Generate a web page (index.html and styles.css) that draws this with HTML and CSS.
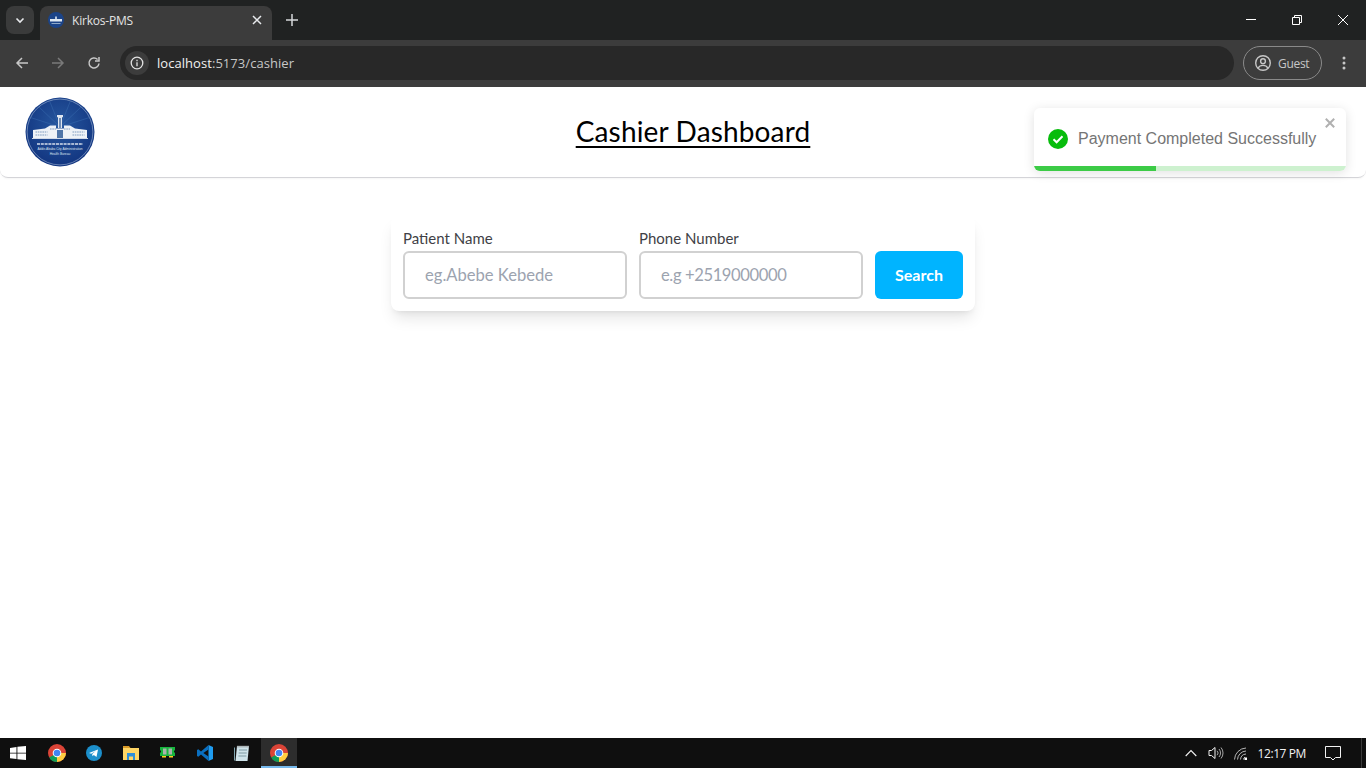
FILE: index.html
```html
<!DOCTYPE html>
<html lang="en">
<head>
<meta charset="utf-8">
<title>Kirkos-PMS</title>
<link rel="stylesheet" href="styles.css">
</head>
<body>
<div class="screen">
  <div class="tabstrip">
    <button class="tabsearch"><svg width="12" height="12" viewBox="0 0 12 12"><path d="M2.500 4.500 6 8l3.500-3.500" fill="none" stroke="#e8eaed" stroke-width="1.600"/></svg></button>
    <div class="tab">
      <svg class="favicon" width="16" height="16" viewBox="0 0 16 16"><circle cx="8" cy="8" r="8" fill="#1c4488"/><rect x="2" y="7" width="12" height="2.500" fill="#dfe8f2"/><rect x="7.200" y="4.500" width="1.600" height="3" fill="#dfe8f2"/><rect x="3.500" y="11" width="9" height="1" fill="#8fa8c8"/></svg>
      <span class="tabtitle">Kirkos-PMS</span>
      <svg class="tabclose" width="10" height="10" viewBox="0 0 10 10"><path d="M1 1l8 8M9 1 1 9" stroke="#e8eaed" stroke-width="1.500"/></svg>
    </div>
    <svg class="newtab" width="12" height="12" viewBox="0 0 12 12"><path d="M6 0v12M0 6h12" stroke="#d5d7da" stroke-width="1.500"/></svg>
    <div class="winctl">
      <svg width="46" height="40" viewBox="0 0 46 40"><path d="M18 19.500h10" stroke="#fff"/></svg>
      <svg width="46" height="40" viewBox="0 0 46 40"><path d="M18.500 17.500h7v7h-7zM20.500 17.500v-2h7v7h-2" fill="none" stroke="#fff"/></svg>
      <svg width="46" height="40" viewBox="0 0 46 40"><path d="M18 15l10 10M28 15 18 25" stroke="#fff"/></svg>
    </div>
  </div>
  <div class="toolbar">
    <svg class="navicon" width="16" height="16" viewBox="0 0 16 16"><path d="M14 8H3M8 3 3 8l5 5" fill="none" stroke="#c7c7c7" stroke-width="1.500"/></svg>
    <svg class="navicon" width="16" height="16" viewBox="0 0 16 16"><path d="M2 8h11M8 3l5 5-5 5" fill="none" stroke="#7a7a7a" stroke-width="1.500"/></svg>
    <svg class="navicon" width="16" height="16" viewBox="0 0 16 16"><path d="M13 8.500A5 5 0 1 1 11.600 4.500M13 2v4H9" fill="none" stroke="#c7c7c7" stroke-width="1.500"/></svg>
    <div class="omnibox">
      <span class="siteinfo"><svg width="14" height="14" viewBox="0 0 14 14"><circle cx="7" cy="7" r="5.800" fill="none" stroke="#e3e3e3" stroke-width="1.300"/><path d="M7 6.200v4M7 3.800v1.400" stroke="#e3e3e3" stroke-width="1.300"/></svg></span>
      <span class="url"><span class="host">localhost</span>:5173/cashier</span>
    </div>
    <div class="guest">
      <svg width="18" height="18" viewBox="0 0 18 18"><circle cx="9" cy="9" r="7.300" fill="none" stroke="#c7c7c7" stroke-width="1.400"/><circle cx="9" cy="7.200" r="2.400" fill="none" stroke="#c7c7c7" stroke-width="1.400"/><path d="M4.200 14c1-2 3-2.600 4.800-2.600s3.800.6 4.800 2.600" fill="none" stroke="#c7c7c7" stroke-width="1.400"/></svg>
      <span>Guest</span>
    </div>
    <svg class="menu" width="4" height="14" viewBox="0 0 4 14"><circle cx="2" cy="2" r="1.500" fill="#c7c7c7"/><circle cx="2" cy="7" r="1.500" fill="#c7c7c7"/><circle cx="2" cy="12" r="1.500" fill="#c7c7c7"/></svg>
  </div>

  <div class="page">
    <header class="apphead">
      <svg class="logo" width="70" height="70" viewBox="0 0 70 70">
        <defs>
          <radialGradient id="sky" cx="50%" cy="40%" r="60%"><stop offset="0" stop-color="#27589f"/><stop offset="1" stop-color="#123580"/></radialGradient>
        </defs>
        <circle cx="35" cy="35" r="34.500" fill="url(#sky)"/>
        <circle cx="35" cy="35" r="32.900" fill="none" stroke="#b9cbe2" stroke-width=".5"/>
        <path d="M35 30 14 10M35 30 25 5M35 30 45 5M35 30 56 10M35 30 4 20M35 30 66 20" stroke="#3a6db0" stroke-width="1" opacity=".5"/>
        <path d="M32 18h6v2.200h-1v10.800h-4V20.200h-1z" fill="#dfe6f0"/>
        <rect x="34" y="21" width="2" height="10" fill="#6f8cb5"/>
        <path d="M8 33l12-1.500 5-3h6v3h8v-3h6l5 3 12 1.500v8H8z" fill="#eef2f7"/>
        <path d="M10.500 35h12M10.500 38h12M25 32h6M39 32h6M47.500 35h12M47.500 38h12" stroke="#7f9bc0" stroke-width="1.100" stroke-dasharray="1.600 .7"/>
        <rect x="32" y="33" width="6" height="8" fill="#4f75a8"/>
        <path d="M7 41.500h56" stroke="#fff" stroke-width=".8"/>
        <path d="M12 47h46" stroke="#d5deeb" stroke-width="1.300" stroke-dasharray="3 .8"/>
        <text class="logotext" x="35" y="52.800">Addis Ababa City Administration</text>
        <text class="logotext" x="35" y="57.800">Health Bureau</text>
      </svg>
      <h1 class="apptitle">Cashier Dashboard</h1>
    </header>

    <main class="content">
      <form class="searchcard">
        <div class="field">
          <label class="fieldlabel" for="pname">Patient Name</label>
          <input class="fieldinput" id="pname" type="text" placeholder="eg.Abebe Kebede">
        </div>
        <div class="field">
          <label class="fieldlabel" for="phone">Phone Number</label>
          <input class="fieldinput phoneinput" id="phone" type="text" placeholder="e.g +2519000000">
        </div>
        <button class="searchbtn" type="button">Search</button>
      </form>
    </main>

    <div class="toast">
      <svg class="toasticon" width="20" height="20" viewBox="0 0 20 20"><circle cx="10" cy="10" r="10" fill="#07bc0c"/><path d="M5.500 10.300 8.600 13.300 14.500 7.200" fill="none" stroke="#fff" stroke-width="2"/></svg>
      <span class="toasttext">Payment Completed Successfully</span>
      <svg class="toastclose" width="10" height="10" viewBox="0 0 10 10"><path d="M.8.8l8.400 8.400M9.200.8.800 9.200" stroke="#b0b0b0" stroke-width="2"/></svg>
      <div class="toastbar"><div class="toastfill"></div></div>
    </div>
  </div>

  <footer class="taskbar">
    <div class="startbtn"><svg width="16" height="16" viewBox="0 0 18 16"><path d="M0 2.300 7.300 1.200v6.400H0zM8.300 1.100 18 0v7.600H8.300zM0 8.500h7.300v6.300L0 13.800zM8.300 8.500H18V16L8.300 14.900z" fill="#fff"/></svg></div>
    <div class="taskitem"><svg width="18" height="18" viewBox="0 0 18 18"><circle cx="9" cy="9" r="9" fill="#db4437"/><path d="M9 9 1.200 13.500A9 9 0 0 0 9 18l4.500-7.800z" fill="#0f9d58"/><path d="M9 9h9a9 9 0 0 1-9 9z" fill="#ffcd40"/><circle cx="9" cy="9" r="4.300" fill="#fff"/><circle cx="9" cy="9" r="3.300" fill="#4285f4"/></svg></div>
    <div class="taskitem"><svg width="16" height="16" viewBox="0 0 16 16"><circle cx="8" cy="8" r="8" fill="#1c8fcb"/><path d="M3 8l9-3.500-1.500 7.500-2.700-2-1.300 1.300-.3-2.300 3.500-3-4.500 2.700z" fill="#fff"/></svg></div>
    <div class="taskitem"><svg width="16" height="16" viewBox="0 0 16 16"><path d="M0 1h6l1.500 2H0z" fill="#d99a28"/><rect y="3" width="16" height="12" fill="#ffd665"/><rect x="4" y="8" width="8" height="7" fill="#2f8fd8"/><rect x="6" y="11.500" width="4" height="3.500" fill="#ffd665"/></svg></div>
    <div class="taskitem"><svg width="15" height="12" viewBox="0 0 15 12"><path d="M0 0h15v3l-1 1v1l1 1v3H0V6l1-1V4L0 3z" fill="#17b53e"/><rect x="3" y="1.500" width="3.500" height="6" fill="#a9b3ab"/><rect x="8.500" y="1.500" width="3.500" height="6" fill="#a9b3ab"/><path d="M2 9h4v1.500H2zM9 9h4v1.500H9z" fill="#ffd21f"/></svg></div>
    <div class="taskitem"><svg width="16" height="16" viewBox="0 0 16 16"><path d="M11.500 0 16 2v12l-4.500 2z" fill="#1f9cf0"/><path d="M11.500 0 4 6.500 1.300 4.200 0 5v6l1.300.8L4 9.500 11.500 16v-4.500L6.300 8l5.200-3.500z" fill="#0a6fc0"/></svg></div>
    <div class="taskitem"><svg width="16" height="17" viewBox="0 0 16 17"><path d="M3 1h12l-1.500 15H1.500z" fill="#cfe3ea"/><path d="M0 2.500h1v13H0z" fill="#7fa3ad"/><path d="M5 5h8M4.700 8h8M4.400 11h8" stroke="#7f9aa3"/><path d="M4 .5v2M6 .5v2M8 .5v2M10 .5v2M12 .5v2M14 .5v2" stroke="#8a8a8a"/></svg></div>
    <div class="taskitem active"><svg width="18" height="18" viewBox="0 0 18 18"><circle cx="9" cy="9" r="9" fill="#db4437"/><path d="M9 9 1.200 13.500A9 9 0 0 0 9 18l4.500-7.800z" fill="#0f9d58"/><path d="M9 9h9a9 9 0 0 1-9 9z" fill="#ffcd40"/><circle cx="9" cy="9" r="4.300" fill="#fff"/><circle cx="9" cy="9" r="3.300" fill="#4285f4"/></svg></div>
    <div class="tray">
      <svg width="12" height="8" viewBox="0 0 12 8"><path d="M.7 7 6 1.500 11.300 7" fill="none" stroke="#f2f2f2" stroke-width="1.100"/></svg>
      <svg width="16" height="14" viewBox="0 0 16 14"><path d="M1 4.500h2.500L7 1.500v11l-3.500-3H1z" fill="none" stroke="#f2f2f2"/><path d="M9 4.800a3 3 0 0 1 0 4.400M11 3a6 6 0 0 1 0 8M13 1.500a8.500 8.500 0 0 1 0 11" fill="none" stroke="#a8a8a8"/></svg>
      <svg width="14" height="13" viewBox="0 0 14 13"><path d="M.5 12.500A12 12 0 0 1 12 1M3.500 12.500A9 9 0 0 1 12 4M6.500 12.500A6 6 0 0 1 12 7M9.500 12.500a3 3 0 0 1 1.500-2.500" fill="none" stroke="#b5b5b5"/><rect x="10.500" y="10.500" width="2.500" height="2.500" fill="#fff"/></svg>
      <span class="clock">12:17 PM</span>
      <svg class="notif" width="16" height="15" viewBox="0 0 16 15"><path d="M.5.500h15v11h-5l-2.500 2.500-2.500-2.500h-5z" fill="none" stroke="#f2f2f2"/></svg>
      <span class="peek"></span>
    </div>
  </footer>
</div>
</body>
</html>
```

FILE: styles.css
```css
* { box-sizing: border-box; }
html, body { margin: 0; height: 100%; overflow: hidden; background: #fff; }
.screen { width: 1366px; height: 768px; display: flex; flex-direction: column; }

.tabstrip { height: 40px; background: #202222; display: flex; align-items: flex-start; padding: 6px 0 0 6px; position: relative; }
.tabsearch { width: 28px; height: 28px; border: 0; padding: 0; border-radius: 8px; background: #3a3b3b; display: flex; align-items: center; justify-content: center; }
.tab { width: 232px; height: 34px; margin-left: 6px; background: #3c3c3c; border-radius: 8px 8px 0 0; display: flex; align-items: center; padding: 0 10px 6px 8px; color: #e3e3e3; font: 12px "Open Sans", sans-serif; }
.favicon { flex: none; }
.tabtitle { margin-left: 8px; flex: 1; letter-spacing: -.2px; }
.newtab { margin: 8px 0 0 14px; }
.winctl { margin-left: auto; margin-top: -6px; display: flex; }
.winctl svg { display: block; }

.toolbar { height: 47px; background: #3c3c3c; display: flex; align-items: center; padding: 0 13px 1px 14px; color: #e3e3e3; gap: 20px; }
.navicon { flex: none; }
.omnibox { width: 1114px; height: 34px; margin-left: -2px; margin-right: -11px; border-radius: 17px; background: #282828; display: flex; align-items: center; padding-left: 5px; }
.siteinfo { width: 24px; height: 24px; border-radius: 50%; background: #3c3c3c; display: flex; align-items: center; justify-content: center; }
.url { margin-left: 8px; font: 13px "Open Sans", sans-serif; color: #c7c7c7; letter-spacing: .05px; }
.host { color: #f1f1f1; }
.guest { width: 79px; height: 34px; border: 1px solid #8a8a8a; border-radius: 17px; display: flex; align-items: center; gap: 6px; padding-left: 10px; font: 12px "Open Sans", sans-serif; letter-spacing: -.3px; color: #c7c7c7; }
.menu { margin-left: 0; }

.page { flex: 1; position: relative; background: #fff; display: flex; flex-direction: column; min-height: 0; }
.apphead { height: 91px; display: flex; align-items: center; justify-content: center; position: relative; padding: 0 0 2px 20px; border-bottom: 1px solid #d4d4d8; border-radius: 0 0 8px 8px; box-shadow: 0 1px 2px rgba(0,0,0,.04); }
.logo { position: absolute; left: 25px; top: 10px; }
.logotext { font: 3.200px "Liberation Sans", sans-serif; fill: #dfe6f0; text-anchor: middle; }
.apptitle { margin: 0; font: 400 28px/36px Lato, sans-serif; letter-spacing: .15px; color: #000; text-decoration: underline; text-underline-offset: 4px; }

.content { flex: 1; display: flex; justify-content: center; align-items: flex-start; padding-top: 38px; }
.searchcard { width: 584px; display: flex; align-items: flex-end; gap: 12px; padding: 12px; background: #fff; border-radius: 8px; box-shadow: 0 10px 15px -3px rgba(0,0,0,.1), 0 4px 6px -4px rgba(0,0,0,.1); }
.field { width: 224px; display: flex; flex-direction: column; }
.fieldlabel { font: 15px/20px Lato, sans-serif; color: #3f3f46; margin-bottom: 3px; }
.fieldinput { width: 224px; height: 48px; border: 2px solid #d1d1d1; border-radius: 6px; padding: 0 20px 1px; font: 16.600px Lato, sans-serif; outline: none; }
.fieldinput::placeholder { color: #9ca3af; opacity: 1; }
.phoneinput { letter-spacing: -.4px; }
.searchbtn { width: 88px; height: 48px; border: 0; border-radius: 6px; padding: 0 0 2px; background: #00b4ff; color: #fff; font: 700 16px Lato, sans-serif; }

.toast { position: absolute; left: 1034px; top: 21px; width: 312px; height: 63px; background: #fff; border-radius: 6px; overflow: hidden; box-shadow: 0 2px 12px rgba(0,0,0,.12); display: flex; align-items: center; padding: 0 0 1px 14px; }
.toasticon { flex: none; }
.toasttext { margin-left: 10px; font: 16px "Liberation Sans", sans-serif; color: #757575; white-space: nowrap; }
.toastclose { position: absolute; right: 11px; top: 10px; }
.toastbar { position: absolute; left: 0; right: 0; bottom: 0; height: 5px; background: #cdf1cf; }
.toastfill { width: 39%; height: 100%; background: #3ccb46; }

.taskbar { height: 30px; background: #0f0f0f; display: flex; align-items: stretch; }
.startbtn { width: 38px; padding-right: 3px; display: flex; align-items: center; justify-content: center; }
.taskitem { width: 37px; display: flex; align-items: center; justify-content: center; }
.taskitem.active { width: 36px; margin-left: 1px; background: #2d2d2d; border-bottom: 2px solid #76b9ed; padding-top: 2px; }
.tray { margin-left: auto; display: flex; align-items: center; color: #fff; }
.clock { font: 12px "Open Sans", sans-serif; letter-spacing: -.4px; margin: 0 0 0 9px; color: #f2f2f2; }
.tray svg:nth-child(2) { margin-left: 11px; }
.tray svg:nth-child(3) { margin-left: 10px; }
.notif { margin-left: 19px; }
.peek { width: 1px; height: 30px; background: #3a3a3a; margin: 0 4px 0 20px; }
```
